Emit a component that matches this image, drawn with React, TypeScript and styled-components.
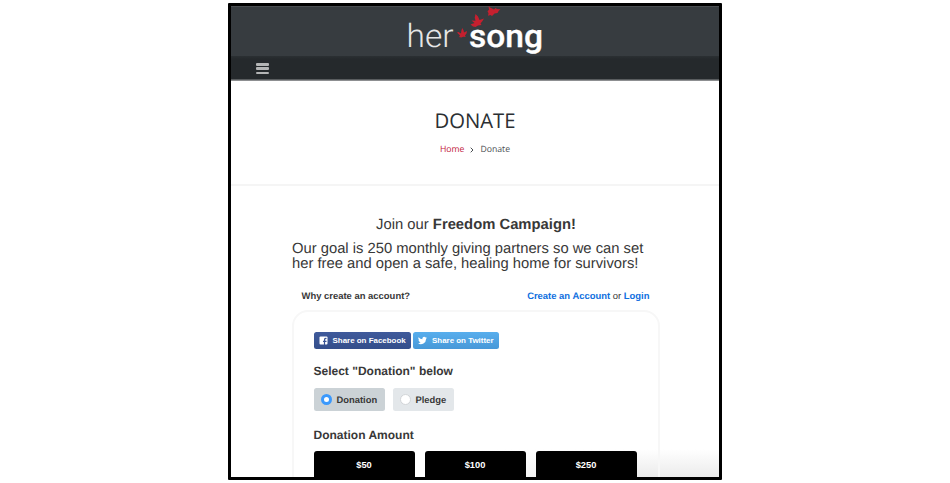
import React from "react";
import styled, { createGlobalStyle } from "styled-components";

const Global = createGlobalStyle`
  * { box-sizing: border-box; }
  body {
    margin: 0;
    background: #fff;
    font-family: "Liberation Sans", Arial, sans-serif;
    color: #383838;
    text-rendering: geometricPrecision;
  }
`;

const Frame = styled.div`
  width: 494px;
  height: 477px;
  margin: 3px 0 0 228px;
  border: 3px solid #000;
  border-radius: 1px;
  overflow: hidden;
  background:
    linear-gradient(to right, #fff 45%, transparent 75%),
    linear-gradient(#fff 0, #fff 443px, #ebebeb 471px);
`;
const Header = styled.header`
  height: 50px;
  background: #373c40;
  border-top: 1px solid #4a4e51;
  display: flex;
  justify-content: center;
`;
const Nav = styled.nav`
  height: 25px;
  background: linear-gradient(#2b3033 0, #25292c 3px, #25292c 23px, #8d8f91 24px);
  padding: 7px 0 0 25px;
`;
const Burger = styled.div`
  width: 13px;
  height: 11px;
  display: flex;
  flex-direction: column;
  justify-content: space-between;
`;
const Bar = styled.i`
  height: 2.5px;
  background: #b4b5b6;
  border-radius: 1px;
`;
const Hero = styled.section`
  height: 105px;
  border-bottom: 2px solid #f5f5f5;
  display: flex;
  flex-direction: column;
  align-items: center;
  font-family: "Open Sans", sans-serif;
`;
const Title = styled.h1`
  margin: 25px 0 0;
  font-size: 20.3px;
  line-height: 28px;
  font-weight: 400;
  color: #2b2f33;
`;
const Crumbs = styled.div`
  display: flex;
  margin-top: 9px;
  font-size: 8.7px;
  line-height: 12px;
  color: #4a4e52;
`;
const Crumb = styled.span<{ $link?: boolean }>`
  color: ${(p) => (p.$link ? "#c2203a" : "inherit")};
`;
const Chevron = styled.svg`
  width: 4px;
  height: 6px;
  margin: 4px 6px 0;
`;
const Content = styled.main`
  width: 368px;
  margin-left: 61px;
`;
const Join = styled.h2`
  margin: 30px 0 0;
  text-align: center;
  font-size: 14.8px;
  line-height: 18px;
  font-weight: 400;
`;
const Goal = styled.p`
  margin: 8px 0 0;
  font-size: 14.78px;
  line-height: 15px;
  white-space: nowrap;
`;
const Account = styled.div`
  display: flex;
  justify-content: space-between;
  margin: 19px 10.5px 0 9.5px;
  font-size: 9.45px;
  line-height: 12px;
`;
const Link = styled.b`
  color: #0f6fe0;
`;
const Card = styled.div`
  margin-top: 7px;
  height: 220px;
  border: 2px solid #f7f7f7;
  border-radius: 16px;
  padding: 20px 19.5px;
`;
const Row = styled.div<{ $gap: number; $top?: number }>`
  display: flex;
  gap: ${(p) => p.$gap}px;
  margin-top: ${(p) => p.$top ?? 0}px;
`;
const Share = styled.button<{ $w: number; $bg: string }>`
  width: ${(p) => p.$w}px;
  height: 17px;
  border: 0;
  border-radius: 2.5px;
  padding: 0 0 0 5px;
  display: flex;
  align-items: center;
  gap: 5px;
  background: ${(p) => p.$bg};
  color: #fff;
  font: bold 7.95px "Liberation Sans", Arial, sans-serif;
  white-space: nowrap;
`;
const Heading = styled.h3<{ $top: number }>`
  margin: ${(p) => p.$top}px 0 0;
  font-size: 12px;
  line-height: 14px;
`;
const Option = styled.label<{ $w: number; $on?: boolean }>`
  width: ${(p) => p.$w}px;
  height: 23px;
  border-radius: 2.5px;
  background: ${(p) => (p.$on ? "#cbd2d6" : "#e3e7ea")};
  display: flex;
  align-items: center;
  padding-left: 7px;
  gap: 5px;
  font-size: 9.4px;
  line-height: 12px;
  font-weight: 700;
`;
const Radio = styled.i<{ $on?: boolean }>`
  width: 11px;
  height: 11px;
  border-radius: 50%;
  background: #fff;
  border: ${(p) => (p.$on ? "3.5px solid #3b99fc" : "1px solid #d2d5d8")};
`;
const Amount = styled.button`
  width: 101px;
  height: 28px;
  border: 0;
  border-radius: 3px 3px 0 0;
  background: #000;
  color: #fff;
  padding: 0;
  font: bold 9.3px "Liberation Sans", Arial, sans-serif;
`;

function Logo() {
  return (
    <svg width="140" height="50" viewBox="405 7 140 50" overflow="visible" fontFamily="Roboto, sans-serif">
      <text x="406.500" y="47.300" fontSize="32.500" fontWeight="300" fill="#e6e6e6" textLength="47" lengthAdjust="spacingAndGlyphs">her</text>
      <text x="469" y="47" fontSize="32" fontWeight="500" fill="#fff" stroke="#fff" strokeWidth=".3" textLength="74" lengthAdjust="spacingAndGlyphs">song</text>
      <g fill="#c5202f">
        <path d="M457 32.500l1.500-.5 2.500 1.500.3-2.500.9-3 1.300 2.200.5 2.300 3-1.500-.5 2.500-1.500 2 .8 1.500-2.500-.2-2 .8-2.300-.5 1-1.500z" />
        <path d="M470.500 24.500l4-1.500-3-2.500 4 .3-.8-3 .8-3.800 2.500 2.500 1.500 3.500 4.500-1.500-1.500 2.500-2 2.500 1 1.500-3.500.5-2.500 1.500-2.500-.5z" />
        <path d="M488.500 6l1.500 1.500 4 2 1.500-1.500 1.500 1 3.500.3-1.700 1.500-1.300 2.200-3 .5-2.500 2.500-1.500-1-2.500.8.5-2.500-1-2 1.500-1.500z" />
      </g>
    </svg>
  );
}

export default function App() {
  return (
    <>
      <Global />
      <Frame>
        <Header><Logo /></Header>
        <Nav><Burger><Bar /><Bar /><Bar /></Burger></Nav>
        <Hero>
          <Title>DONATE</Title>
          <Crumbs>
            <Crumb $link>Home</Crumb>
            <Chevron viewBox="0 0 4 6"><path d="M.7.7 3 3 .7 5.300" fill="none" stroke="#4a4e52" /></Chevron>
            <Crumb>Donate</Crumb>
          </Crumbs>
        </Hero>
        <Content>
          <Join>Join our <b>Freedom Campaign!</b></Join>
          <Goal>Our goal is 250 monthly giving partners so we can set<br />her free and open a safe, healing home for survivors!</Goal>
          <Account>
            <b>Why create an account?</b>
            <span><Link>Create an Account</Link> or <Link>Login</Link></span>
          </Account>
          <Card>
            <Row $gap={2.5}>
              <Share $w={97} $bg="linear-gradient(#3f5a9b, #344e8b)">
                <svg width="9" height="9" viewBox="0 0 9 9"><rect x=".5" y=".5" width="8" height="8" rx="1" fill="#fff" /><path d="M5.500 9V5.500M4 5.300h3.500M5.600 6V3.500q0-1.200 1.900-1" fill="none" stroke="#3a5495" strokeWidth="1.200" /></svg>
                Share on Facebook
              </Share>
              <Share $w={86} $bg="linear-gradient(#58aeed, #4798d8)">
                <svg width="9" height="9" viewBox="0 0 24 24"><path fill="#fff" d="M24 4.600a10 10 0 0 1-2.800.8 5 5 0 0 0 2.100-2.700 10 10 0 0 1-3.100 1.200 4.900 4.900 0 0 0-8.400 4.500A14 14 0 0 1 1.700 3.100a4.900 4.900 0 0 0 1.500 6.600 5 5 0 0 1-2.200-.6 4.900 4.900 0 0 0 4 4.900 5 5 0 0 1-2.300.1 4.900 4.900 0 0 0 4.600 3.400A10 10 0 0 1 0 19.500 14 14 0 0 0 21.500 7a10 10 0 0 0 2.500-2.400z" /></svg>
                Share on Twitter
              </Share>
            </Row>
            <Heading $top={15}>Select "Donation" below</Heading>
            <Row $gap={8} $top={10}>
              <Option $w={71} $on><Radio $on />Donation</Option>
              <Option $w={61}><Radio />Pledge</Option>
            </Row>
            <Heading $top={17}>Donation Amount</Heading>
            <Row $gap={10} $top={9}>
              <Amount>$50</Amount><Amount>$100</Amount><Amount>$250</Amount>
            </Row>
          </Card>
        </Content>
      </Frame>
    </>
  );
}
